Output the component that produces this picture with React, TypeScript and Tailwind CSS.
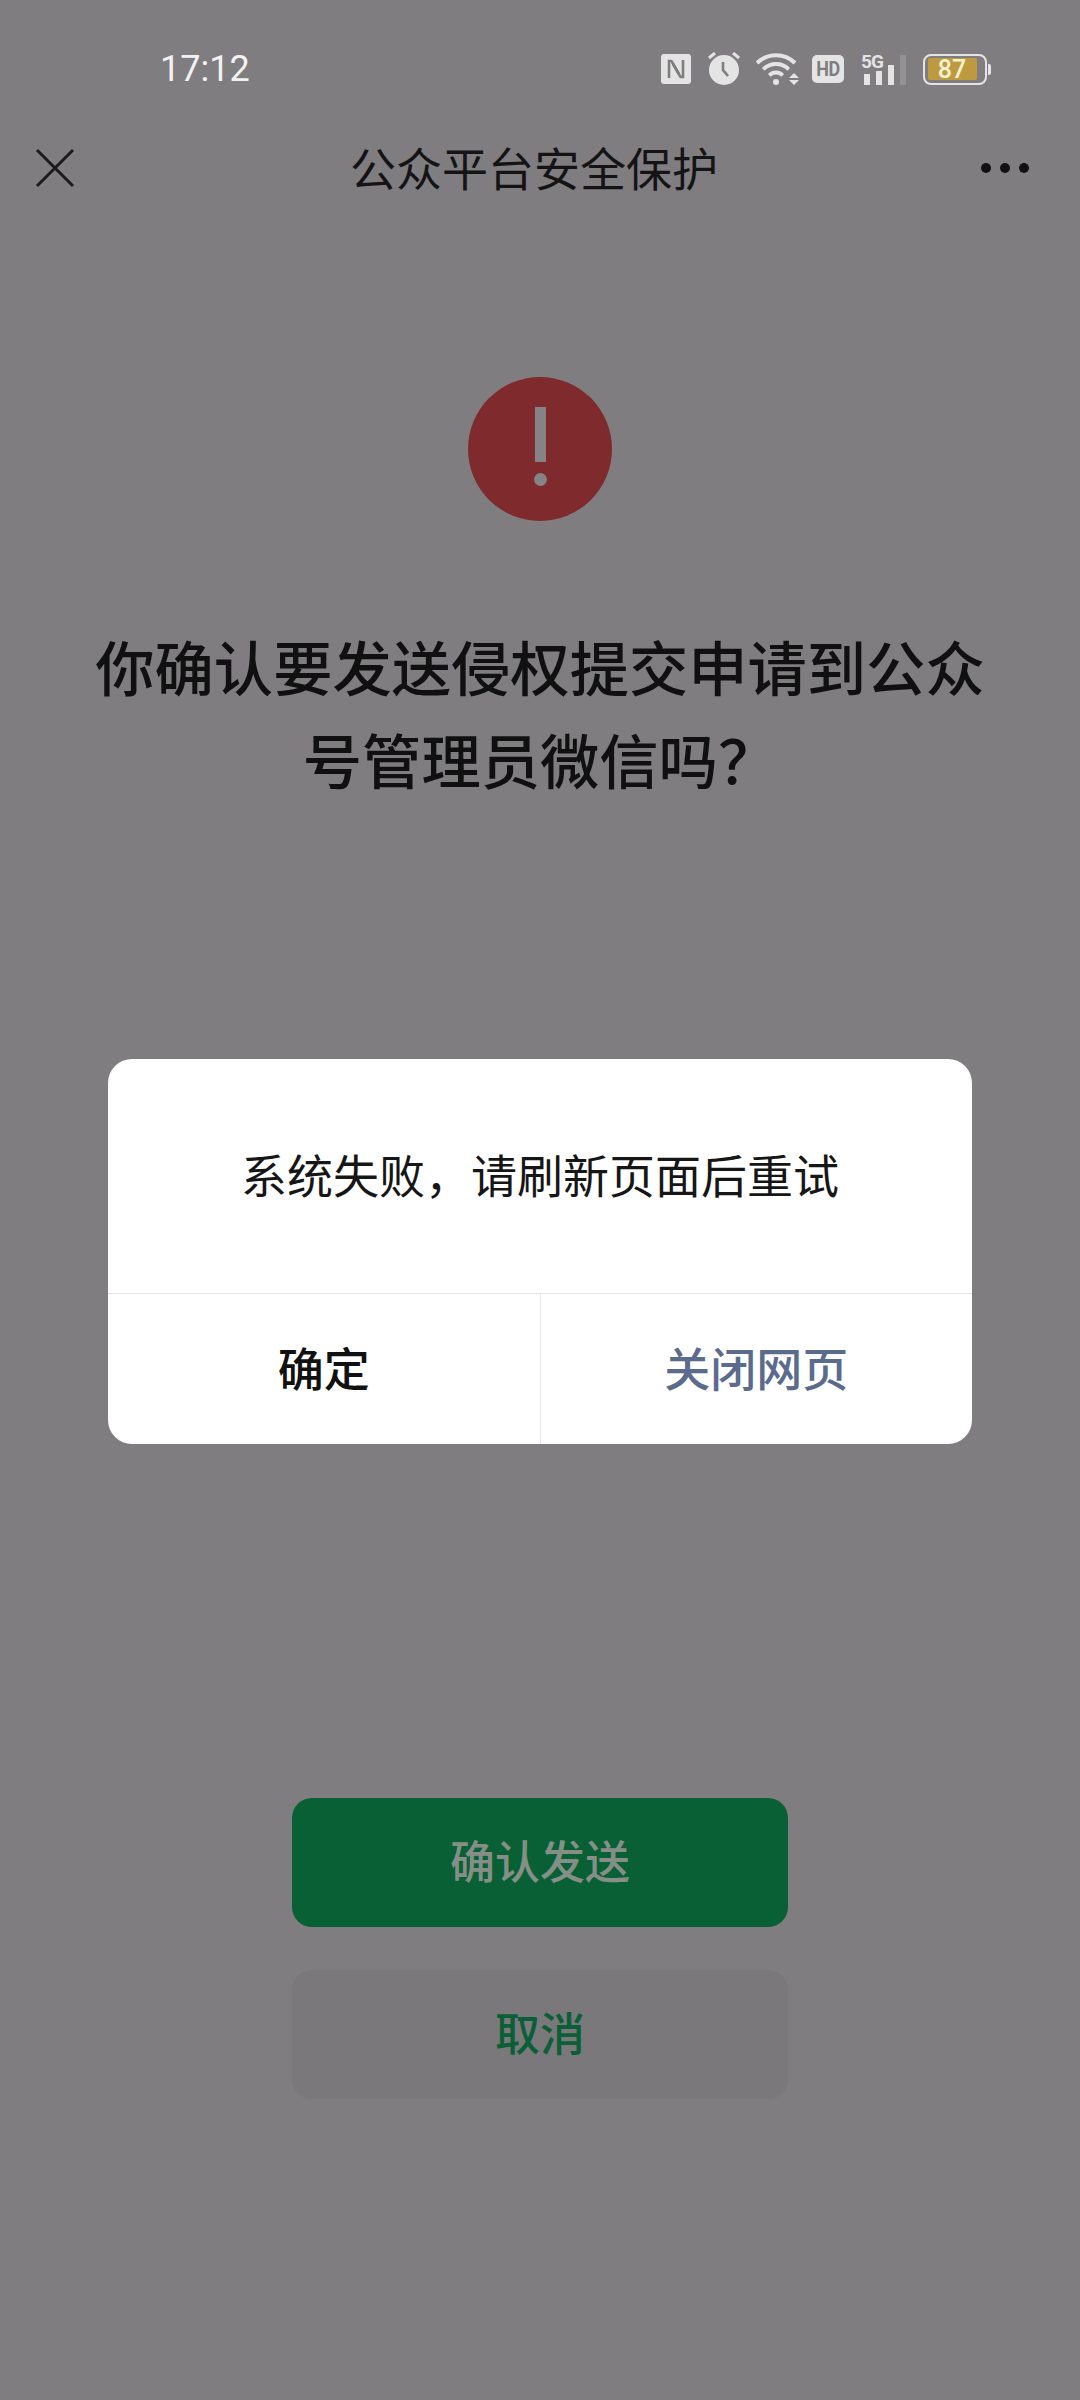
import React from 'react';

const FONT = "font-['Roboto','Noto_Sans_CJK_SC',sans-serif]";

const StatusIcons = () => (
  <div className="flex items-center h-[34px]">
    {/* NFC */}
    <svg width="32" height="32" viewBox="0 0 32 32">
      <rect x="1" y="1" width="30" height="30" rx="3" fill="#e4e4e4" />
      <path d="M9 25V8h2.5L19 21" stroke="#7f7d80" strokeWidth="2.6" fill="none" />
      <path d="M23 7v17h-2.5L13 11" stroke="#7f7d80" strokeWidth="2.6" fill="none" />
    </svg>
    {/* alarm */}
    <svg className="ml-[15px]" width="34" height="34" viewBox="0 0 34 34">
      <circle cx="17" cy="18" r="15" fill="#e4e4e4" />
      <path d="M16 10v8l5 6" stroke="#7f7d80" strokeWidth="2.6" fill="none" />
      <path d="M2 6l6-5M32 6l-6-5" stroke="#e4e4e4" strokeWidth="3" fill="none" />
    </svg>
    {/* wifi */}
    <svg className="ml-[15px]" width="43" height="34" viewBox="0 0 43 34">
      <path d="M1 11A27 27 0 0 1 39 11" stroke="#e4e4e4" strokeWidth="4" fill="none" />
      <path d="M7.3 17.3A18 18 0 0 1 32.7 17.3" stroke="#e4e4e4" strokeWidth="4" fill="none" />
      <path d="M13.3 23.3A9.5 9.5 0 0 1 26.7 23.3" stroke="#e4e4e4" strokeWidth="4" fill="none" />
      <circle cx="20" cy="30" r="3" fill="#e4e4e4" />
      <path d="M33 26l5-5 5 5zM33 28l5 5 5-5z" fill="#e4e4e4" />
    </svg>
    {/* HD */}
    <div className="ml-[13px] w-[32px] h-[28px] rounded-[5px] bg-[#e4e4e4] flex items-center justify-center text-[18px] font-bold leading-none tracking-[-0.5px] text-[#7f7d80] font-['Roboto',sans-serif]">
      <span className="scale-y-110">HD</span>
    </div>
    {/* 5G + signal */}
    <div className="relative ml-[17px] w-[46px] h-[31px]">
      <span className="absolute left-0 top-[-2px] text-[19px] font-bold leading-none tracking-[-1px] text-[#e4e4e4] font-['Roboto',sans-serif]">5G</span>
      <div className="absolute left-[3px] bottom-0 flex items-end gap-[6px]">
        <div className="w-[6px] h-[11px] bg-[#e4e4e4]" />
        <div className="w-[6px] h-[14px] bg-[#e4e4e4]" />
        <div className="w-[6px] h-[20px] bg-[#e4e4e4]" />
        <div className="w-[6px] h-[30px] bg-[#949294]" />
      </div>
    </div>
    {/* battery */}
    <div className="flex items-center ml-[16px]">
      <div className="w-[64px] h-[31px] rounded-[8px] border-[2.5px] border-[#e4e4e4] p-[2.5px]">
        <div className="h-full w-[49px] rounded-[2px] bg-[#bd9a3f] flex items-center justify-center text-[25px] font-medium leading-none text-[#f7f1d0] font-['Roboto',sans-serif]">
          87
        </div>
      </div>
      <div className="w-[3px] h-[11px] ml-[1px] rounded-r-[2px] bg-[#e4e4e4]" />
    </div>
  </div>
);

const App = () => {
  return (
    <div className={`relative w-[1080px] h-[2400px] overflow-hidden bg-[#7f7d80] ${FONT}`}>
      {/* Status bar */}
      <div className="flex items-center justify-between h-[34px] mt-[52px] pl-[160px] pr-[89px]">
        <span className="text-[36px] leading-none text-[#f2f2f2] font-['Roboto',sans-serif]">17:12</span>
        <StatusIcons />
      </div>

      {/* Nav bar */}
      <div className="flex items-center justify-between h-[60px] mt-[52px] pl-[35px] pr-[51px]">
        <div className="w-[52px]">
          <svg width="40" height="40" viewBox="0 0 40 40">
            <path d="M2 2l36 36M38 2L2 38" stroke="#1b1b1b" strokeWidth="3" fill="none" />
          </svg>
        </div>
        <span className="text-[46px] leading-none pt-[3px] text-[#141414]">公众平台安全保护</span>
        <div className="flex items-center gap-[9px]">
          <div className="w-[10px] h-[10px] rounded-full bg-[#111111]" />
          <div className="w-[10px] h-[10px] rounded-full bg-[#111111]" />
          <div className="w-[10px] h-[10px] rounded-full bg-[#111111]" />
        </div>
      </div>

      {/* Warning icon */}
      <div className="flex justify-center mt-[179px]">
        <div className="w-[144px] h-[144px] rounded-full bg-[#7f2a2c] flex flex-col items-center pt-[30px]">
          <div className="w-[11px] h-[55px] bg-[#858385]" />
          <div className="w-[13px] h-[13px] mt-[11px] rounded-full bg-[#858385]" />
        </div>
      </div>

      {/* Heading */}
      <div className="mt-[103px] px-[80px] text-center text-[59.3px] leading-[93px] font-medium text-[#101010]">
        你确认要发送侵权提交申请到公众号管理员微信吗？
      </div>

      {/* Buttons */}
      <div className="flex flex-col items-center gap-[43px] mt-[988px]">
        <div className="w-[496px] h-[129px] pt-[3px] rounded-[20px] bg-[#0a6035] flex items-center justify-center text-[45px] font-medium text-[#858f87]">
          确认发送
        </div>
        <div className="w-[496px] h-[129px] pt-[2px] rounded-[20px] bg-[#7a787b] flex items-center justify-center text-[45px] font-medium text-[#0b5f37]">
          取消
        </div>
      </div>

      {/* Dialog */}
      <div className="absolute left-[108px] top-[1059px] w-[864px] h-[385px] rounded-[24px] bg-white flex flex-col overflow-hidden">
        <div className="h-[234px] pt-[3px] flex items-center justify-center text-[46px] text-[#161616]">
          系统失败，请刷新页面后重试
        </div>
        <div className="flex flex-1 border-t border-[#e5e5e5]">
          <div className="flex-1 pt-[3px] flex items-center justify-center text-[46px] font-medium text-[#111111] border-r border-[#e8e8e8]">确定</div>
          <div className="flex-1 pt-[3px] flex items-center justify-center text-[46px] font-medium text-[#5b6b8d]">关闭网页</div>
        </div>
      </div>
    </div>
  );
};

export default App;
